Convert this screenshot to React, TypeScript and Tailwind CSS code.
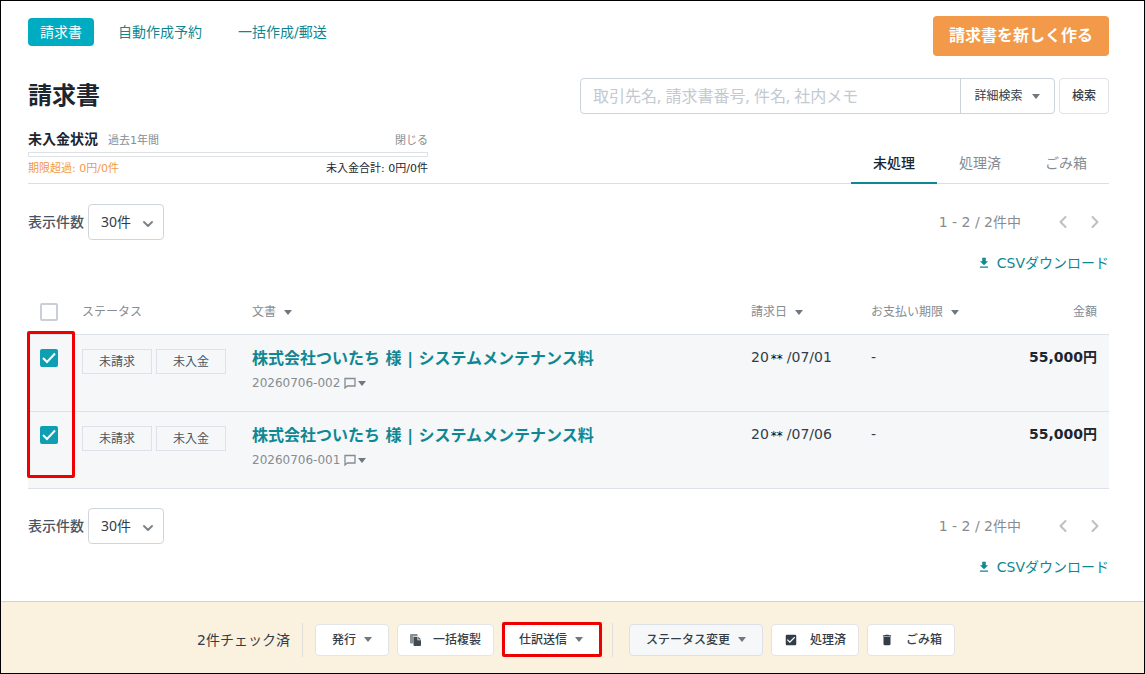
import { useState } from "react";
import { ChevronDown, ChevronLeft, ChevronRight } from "lucide-react";
import { MdCheckBox, MdDelete, MdDownload } from "react-icons/md";

type Invoice = {
  id: string;
  title: string;
  monthDay: string;
  due: string;
  amount: string;
};

const invoices: Invoice[] = [
  {
    id: "20260706-002",
    title: "株式会社ついたち 様 | システムメンテナンス料",
    monthDay: "/07/01",
    due: "-",
    amount: "55,000円",
  },
  {
    id: "20260706-001",
    title: "株式会社ついたち 様 | システムメンテナンス料",
    monthDay: "/07/06",
    due: "-",
    amount: "55,000円",
  },
];

const Caret = () => (
  <svg viewBox="0 0 8 5" className="h-[5px] w-2 shrink-0 fill-[#6f777f]" aria-hidden="true">
    <path d="M0 0h8L4 5z" />
  </svg>
);

const CopyIcon = () => (
  <svg viewBox="0 0 11 12" className="h-3 w-[11px] shrink-0" aria-hidden="true">
    <path d="M0 1a1 1 0 0 1 1-1h6.500v2H3.300v7.500H1a1 1 0 0 1-1-1z" fill="#8a8f92" />
    <path d="M3.500 2.800h4v3.500h3.500V11a1 1 0 0 1-1 1H4.500a1 1 0 0 1-1-1z" fill="#3f4a54" />
    <path d="M8.300 2.800L11 5.500H8.300z" fill="#3f4a54" />
  </svg>
);

const CommentIcon = () => (
  <svg viewBox="0 0 12 12" className="size-3 shrink-0" fill="none" stroke="currentColor" strokeWidth="1.300" aria-hidden="true">
    <path d="M1 1.500h10v7.500H3.300L1 11z" />
  </svg>
);

const Checkbox = ({
  label,
  checked,
  onChange,
}: {
  label: string;
  checked: boolean;
  onChange: () => void;
}) => (
  <span className="relative block size-[18px]">
    <input
      type="checkbox"
      aria-label={label}
      checked={checked}
      onChange={onChange}
      className="peer block size-[18px] appearance-none rounded-xs border-2 border-[#c9ced8] bg-white checked:border-[#0e9fb2] checked:bg-[#0e9fb2]"
    />
    <svg
      viewBox="0 0 18 18"
      className="pointer-events-none absolute inset-0 hidden fill-none stroke-white stroke-2 peer-checked:block"
      aria-hidden="true"
    >
      <path d="M3 9l4 4 8-8.500" />
    </svg>
  </span>
);

const ListControls = ({ id }: { id: string }) => (
  <div>
    <div className="flex items-center justify-between">
      <div className="flex items-center gap-1">
        <label htmlFor={id} className="text-sm font-medium text-[#4b555f]">
          表示件数
        </label>
        <div className="relative">
          <select
            id={id}
            className="h-9 w-19 appearance-none rounded-sm border border-[#ced5dc] bg-white pl-3 font-['Noto_Sans','Noto_Sans_CJK_JP',sans-serif] text-sm text-[#333d47]"
          >
            <option>30件</option>
            <option>50件</option>
            <option>100件</option>
          </select>
          <ChevronDown
            className="pointer-events-none absolute top-3 right-2 size-4 text-[#7b838b]"
            strokeWidth={3}
          />
        </div>
      </div>
      <div className="flex items-center text-[#868c92]">
        <span className="text-sm">1 - 2 / 2件中</span>
        <div className="ml-8 flex gap-3 pr-1 text-[#bcc1c7]">
          <button type="button" aria-label="前へ">
            <ChevronLeft className="size-5" strokeWidth={2.5} />
          </button>
          <button type="button" aria-label="次へ">
            <ChevronRight className="size-5" strokeWidth={2.5} />
          </button>
        </div>
      </div>
    </div>
    <div className="mt-[13px] flex justify-end">
      <a href="#csv" className="flex items-center gap-1.5 text-sm text-[#0f8793]">
        <MdDownload className="size-3.5" />
        CSVダウンロード
      </a>
    </div>
  </div>
);

const Badge = ({ text }: { text: string }) => (
  <span className="flex h-[25px] w-[70px] items-center justify-center border border-[#dce2e7] text-xs text-[#4b555f]">
    {text}
  </span>
);

export default function App() {
  const [selected, setSelected] = useState<string[]>(invoices.map((i) => i.id));
  const [tab, setTab] = useState("未処理");

  const toggle = (id: string) =>
    setSelected((prev) =>
      prev.includes(id) ? prev.filter((x) => x !== id) : [...prev, id],
    );

  const actionButton =
    "flex h-8 items-center rounded-sm border border-[#e2e5e8] bg-white text-xs font-medium text-[#333d47]";

  return (
    <div className="flex min-h-screen flex-col border border-black bg-white font-['DejaVu_Sans','Noto_Sans_CJK_JP',sans-serif] text-[#333d47]">
      <main className="pr-[35px] pb-6 pl-[27px]">
        {/* ナビゲーション */}
        <header className="flex items-start justify-between pt-[15px]">
          <nav className="flex items-center gap-3 pt-0.5 text-sm text-[#0f8793]">
            <a href="#invoices" className="flex h-7 items-center rounded-sm bg-[#00acc1] px-3 text-white">
              請求書
            </a>
            <a href="#auto" className="px-3">
              自動作成予約
            </a>
            <a href="#bulk" className="px-3">
              一括作成/郵送
            </a>
          </nav>
          <button
            type="button"
            className="h-10 rounded-sm bg-[#f2994a] px-4 text-base font-bold text-white"
          >
            請求書を新しく作る
          </button>
        </header>

        {/* タイトルと検索 */}
        <div className="mt-[22px] flex items-center justify-between">
          <h1 className="text-2xl font-bold text-[#1c2630]">請求書</h1>
          <form className="flex gap-1" onSubmit={(e) => e.preventDefault()}>
            <div className="flex h-9 rounded-sm border border-[#ccd3dc]">
              <input
                type="text"
                aria-label="取引先名, 請求書番号, 件名, 社内メモ"
                placeholder="取引先名, 請求書番号, 件名, 社内メモ"
                className="w-[379px] px-3 font-['Noto_Sans','Noto_Sans_CJK_JP',sans-serif] text-base placeholder:text-[#c3c9d2]"
              />
              <button
                type="button"
                className="flex w-[94px] items-center justify-center gap-2.5 border-l border-[#ccd3dc] text-xs text-[#333d47]"
              >
                詳細検索
                <Caret />
              </button>
            </div>
            <button
              type="submit"
              className="rounded-sm border border-[#dfe3e8] px-3 text-xs font-medium"
            >
              検索
            </button>
          </form>
        </div>

        {/* 未入金状況とタブ */}
        <div className="mt-[15px] flex items-end justify-between border-b border-[#dcdfe2]">
          <section className="w-[400px] pb-1.5">
            <div className="flex items-baseline justify-between">
              <div className="flex items-baseline gap-2.5">
                <h2 className="text-sm font-bold text-[#1c2630]">未入金状況</h2>
                <span className="text-[11px] text-[#868c92]">過去1年間</span>
              </div>
              <button type="button" className="text-[11px] text-[#868c92]">
                閉じる
              </button>
            </div>
            <div className="mt-0.5 h-[5px] border border-[#dfe2e5]" />
            <div className="mt-1 flex justify-between text-[11px]/4">
              <span className="text-[#f2994a]">期限超過: 0円/0件</span>
              <span className="text-[#1c2630]">未入金合計: 0円/0件</span>
            </div>
          </section>
          <div className="-mb-px flex text-sm">
            {["未処理", "処理済", "ごみ箱"].map((name) => (
              <button
                key={name}
                type="button"
                onClick={() => setTab(name)}
                className={
                  tab === name
                    ? "h-10 w-[86px] border-b-2 border-[#0f8793] font-medium text-[#1c2630]"
                    : "h-10 w-[86px] border-b-2 border-transparent text-[#868c92]"
                }
              >
                {name}
              </button>
            ))}
          </div>
        </div>

        <div className="mt-5">
          <ListControls id="per-page-top" />
        </div>

        {/* 請求書一覧 */}
        <div className="relative mt-[18px]">
          <table className="w-full table-fixed text-left">
            <colgroup>
              <col className="w-[42px]" />
              <col className="w-[170px]" />
              <col />
              <col className="w-[120px]" />
              <col className="w-[120px]" />
              <col className="w-[130px]" />
            </colgroup>
            <thead>
              <tr className="h-11 border-b border-[#dce2e7] text-xs text-[#868c92]">
                <th className="pl-3">
                  <Checkbox
                    label="すべて選択"
                    checked={false}
                    onChange={() => setSelected(invoices.map((i) => i.id))}
                  />
                </th>
                <th className="px-3 font-normal">ステータス</th>
                {["文書", "請求日", "お支払い期限"].map((name) => (
                  <th key={name} className="px-3 font-normal">
                    <button type="button" className="flex items-center gap-2">
                      {name}
                      <Caret />
                    </button>
                  </th>
                ))}
                <th className="px-3 text-right font-normal">金額</th>
              </tr>
            </thead>
            <tbody>
              {invoices.map((invoice) => (
                <tr
                  key={invoice.id}
                  className="h-[77px] border-b border-[#dce2e7] bg-[#f5f7f9] align-top text-sm"
                >
                  <td className="pt-3.5 pl-3">
                    <Checkbox
                      label={invoice.id}
                      checked={selected.includes(invoice.id)}
                      onChange={() => toggle(invoice.id)}
                    />
                  </td>
                  <td className="px-3 pt-3.5">
                    <div className="flex gap-1">
                      <Badge text="未請求" />
                      <Badge text="未入金" />
                    </div>
                  </td>
                  <td className="px-3 pt-3">
                    <a href="#detail" className="block text-base font-bold text-[#0f8793]">
                      {invoice.title}
                    </a>
                    <div className="mt-1 flex items-center gap-1 text-xs text-[#868c92]">
                      {invoice.id}
                      <button type="button" aria-label="メモ" className="flex items-center gap-0.5">
                        <CommentIcon />
                        <Caret />
                      </button>
                    </div>
                  </td>
                  <td className="px-3 pt-3">
                    <span className="flex items-center">
                      20
                      <span className="pt-1 pr-1 pl-0.5 text-xs/4 text-black">**</span>
                      {invoice.monthDay}
                    </span>
                  </td>
                  <td className="px-3 pt-3">{invoice.due}</td>
                  <td className="px-3 pt-3 text-right font-bold text-[#1c2630]">
                    {invoice.amount}
                  </td>
                </tr>
              ))}
            </tbody>
          </table>
          {/* チェック欄の強調枠 */}
          <div className="pointer-events-none absolute top-10 -left-px h-[147px] w-12 rounded-xs border-3 border-[#ee0000]" />
        </div>

        <div className="mt-[19px]">
          <ListControls id="per-page-bottom" />
        </div>
      </main>

      {/* 一括操作バー */}
      <footer className="flex flex-1 items-center border-t border-[#cdd3d3] bg-[#faf1df] pt-5 pb-4 pl-[196px]">
        <span className="text-sm">{selected.length}件チェック済</span>
        <div className="ml-3 h-[34px] w-px bg-[#dfe0dc]" />
        <div className="ml-3 flex items-center gap-2">
          <button type="button" className={`${actionButton} gap-2 px-4`}>
            発行
            <Caret />
          </button>
          <button type="button" className={`${actionButton} gap-3 px-3`}>
            <CopyIcon />
            一括複製
          </button>
          <button
            type="button"
            className="flex h-[35px] items-center gap-2 rounded-xs border-3 border-[#ee0000] bg-white pr-4 pl-3.5 text-xs font-medium text-[#333d47]"
          >
            仕訳送信
            <Caret />
          </button>
        </div>
        <div className="ml-2.5 h-[34px] w-px bg-[#dfe0dc]" />
        <div className="ml-4 flex items-center gap-2">
          <button
            type="button"
            className="flex h-8 items-center gap-2 rounded-sm border border-[#dce2e7] bg-[#f5f7f9] px-4 text-xs font-medium text-[#333d47]"
          >
            ステータス変更
            <Caret />
          </button>
          <button type="button" className={`${actionButton} gap-3 px-3`}>
            <MdCheckBox className="size-3.5" />
            処理済
          </button>
          <button type="button" className={`${actionButton} gap-3 px-3`}>
            <MdDelete className="size-3.5" />
            ごみ箱
          </button>
        </div>
      </footer>
    </div>
  );
}
